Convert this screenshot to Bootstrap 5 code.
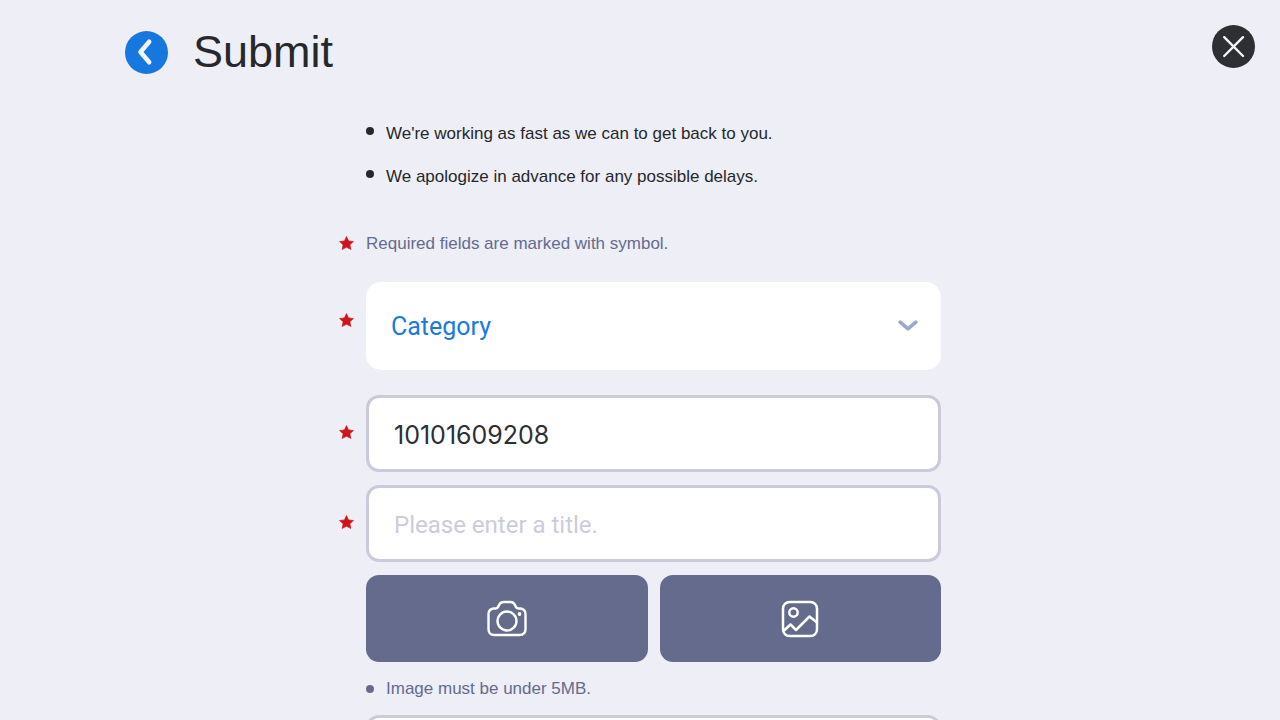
<!DOCTYPE html>
<html lang="en">
<head>
<meta charset="utf-8">
<meta name="viewport" content="width=device-width, initial-scale=1">
<title>Submit</title>
<link rel="stylesheet" href="https://cdn.jsdelivr.net/npm/bootstrap@5.3.0/dist/css/bootstrap.min.css">
<style>
body { background: #edeef6; color: #26282b; font-family: "Liberation Sans", Arial, sans-serif; font-size: 17px; line-height: 24px; }
.page { overflow: hidden; }
.page-head { padding: 25px 25px 0 125px; }
.page-title { font-size: 45px; line-height: 54px; color: #26282b; margin-left: 25px; }
.round-btn { width: 43px; height: 43px; border: 0; border-radius: 50%; padding: 0; }
.round-btn svg, .star svg, .photo-btn svg { display: block; }
.back-btn { background: #1677de; }
.close-btn { background: #2d2f32; }
.form-col { max-width: 602px; padding-top: 43px; }
.indent { padding-left: 27px; }
.notes { gap: 19px; margin-bottom: 43px; }
.dot { width: 8px; height: 8px; border-radius: 50%; background: currentColor; margin-right: 12px; flex: none; }
.notes .dot { margin-bottom: 7px; }
.soft { color: #646b8f; }
.star { width: 15px; margin-right: 12px; flex: none; }
.required-note .star { padding-bottom: 2px; }
.select-row .star { padding-bottom: 12px; }
.field-row .star { padding-bottom: 3px; }
.required-note { margin-bottom: 26px; }
.select-row { margin-bottom: 25px; }
.field { font-family: Roboto, "Liberation Sans", sans-serif; font-size: 25px; color: #2d2f34; }
.field.form-select { height: 88px; padding: 2px 60px 0 25px; border: 0; border-radius: 15px; color: #1a7adf; background-color: #fff; background-position: right 23px center; background-size: 20px 12px;
  background-image: url("data:image/svg+xml,%3Csvg xmlns='http://www.w3.org/2000/svg' viewBox='0 0 20 12'%3E%3Cpath d='M2.2 2.2L10 8.8l7.800-6.600' fill='none' stroke='%239ba8c9' stroke-width='3.6' stroke-linecap='round' stroke-linejoin='round'/%3E%3C/svg%3E"); }
.field.form-control { height: 77px; padding: 2px 25px 0; border: 3px solid #cacada; border-radius: 13px; background: #fff; }
.field.number-field { font-family: Inter, "Liberation Sans", sans-serif; }
.field.form-control::placeholder { color: #cbccdb; font-size: 24px; }
textarea.field.form-control { height: 180px; padding-top: 20px; }
.photo-row { gap: 12px; }
.photo-btn { height: 87px; border: 0; border-radius: 13px; background: #646b8d; padding: 0; }
.image-note { margin: 15px 0 14px; }
.gap-field { margin-bottom: 13px; }
</style>
</head>
<body>
<div class="page vh-100">
  <header class="page-head d-flex align-items-start justify-content-between">
    <div class="d-flex align-items-center">
      <button type="button" class="btn round-btn back-btn" aria-label="Back">
        <svg width="43" height="43" viewBox="0 0 43 43" fill="none" stroke="#f2f6fd" stroke-width="4.600" stroke-linecap="round" stroke-linejoin="round"><path d="M24.200 10.700L15.500 21L24.200 31.300"/></svg>
      </button>
      <h1 class="page-title fw-normal mb-0">Submit</h1>
    </div>
    <button type="button" class="btn round-btn close-btn" aria-label="Close">
      <svg width="43" height="43" viewBox="0 0 43 43" fill="none" stroke="#f4f5f8" stroke-width="2.400" stroke-linecap="round"><path d="M12.200 12.200L31 31M31 12.200L12.200 31"/></svg>
    </button>
  </header>

  <svg class="d-none" aria-hidden="true"><symbol id="star" viewBox="0 0 15 14"><path fill="#d01519" stroke="#d01519" stroke-width=".6" stroke-linejoin="round" d="M7.500.5L9.600 4.900L14.500 5.500L10.900 8.800L11.900 13.500L7.500 11.200L3.100 13.500L4.100 8.800L.5 5.500L5.400 4.900Z"/></symbol></svg>

  <main>
    <form class="form-col mx-auto">
      <ul class="notes list-unstyled d-flex flex-column indent">
        <li class="d-flex align-items-center"><span class="dot"></span>We're working as fast as we can to get back to you.</li>
        <li class="d-flex align-items-center"><span class="dot"></span>We apologize in advance for any possible delays.</li>
      </ul>

      <div class="required-note d-flex align-items-center soft">
        <span class="star"><svg width="15" height="14"><use href="#star"/></svg></span>
        Required fields are marked with symbol.
      </div>

      <div class="select-row d-flex align-items-center">
        <span class="star"><svg width="15" height="14"><use href="#star"/></svg></span>
        <select class="field form-select" aria-label="Category" required><option>Category</option></select>
      </div>

      <div class="field-row d-flex align-items-center gap-field">
        <span class="star"><svg width="15" height="14"><use href="#star"/></svg></span>
        <input class="field number-field form-control" type="text" value="10101609208" aria-label="Account number" required>
      </div>

      <div class="field-row d-flex align-items-center gap-field">
        <span class="star"><svg width="15" height="14"><use href="#star"/></svg></span>
        <input class="field form-control" type="text" placeholder="Please enter a title." aria-label="Title" required>
      </div>

      <div class="indent">
        <div class="photo-row d-flex">
          <button type="button" class="btn photo-btn w-50 d-flex align-items-center justify-content-center" aria-label="Take a photo">
            <svg width="40" height="38" viewBox="0 0 40 38" fill="none" stroke="#fff" stroke-width="2.400" stroke-linejoin="round"><path d="M6.500 8.500H8.500C10.500 8.500 11 7.500 11.800 5.500C12.800 3 14 2 16.500 2H23.500C26 2 27.200 3 28.200 5.500C29 7.500 29.500 8.500 31.500 8.500H33.500C36.500 9 38.500 11 38.500 14V29C38.500 33 36.500 35 32.500 35H7.500C3.500 35 1.500 33 1.500 29V14C1.500 11 3.500 9 6.500 8.500Z"/><circle cx="20" cy="21" r="9.500"/><circle cx="32.500" cy="14" r="1.900" fill="#fff" stroke="none"/></svg>
          </button>
          <button type="button" class="btn photo-btn w-50 d-flex align-items-center justify-content-center" aria-label="Choose an image">
            <svg width="38" height="38" viewBox="0 0 38 38" fill="none" stroke="#fff" stroke-width="2.500" stroke-linejoin="round"><rect x="2" y="2" width="34" height="34" rx="6.500"/><circle cx="12.500" cy="12.500" r="4.200"/><path d="M2.500 31L9.500 24.500L15 30L28.500 16.500L36 22.500"/></svg>
          </button>
        </div>
        <div class="image-note d-flex align-items-center soft"><span class="dot"></span>Image must be under 5MB.</div>
        <textarea class="field form-control" aria-label="Details"></textarea>
      </div>
    </form>
  </main>
</div>
<script src="https://cdn.jsdelivr.net/npm/bootstrap@5.3.0/dist/js/bootstrap.bundle.min.js"></script>
</body>
</html>
